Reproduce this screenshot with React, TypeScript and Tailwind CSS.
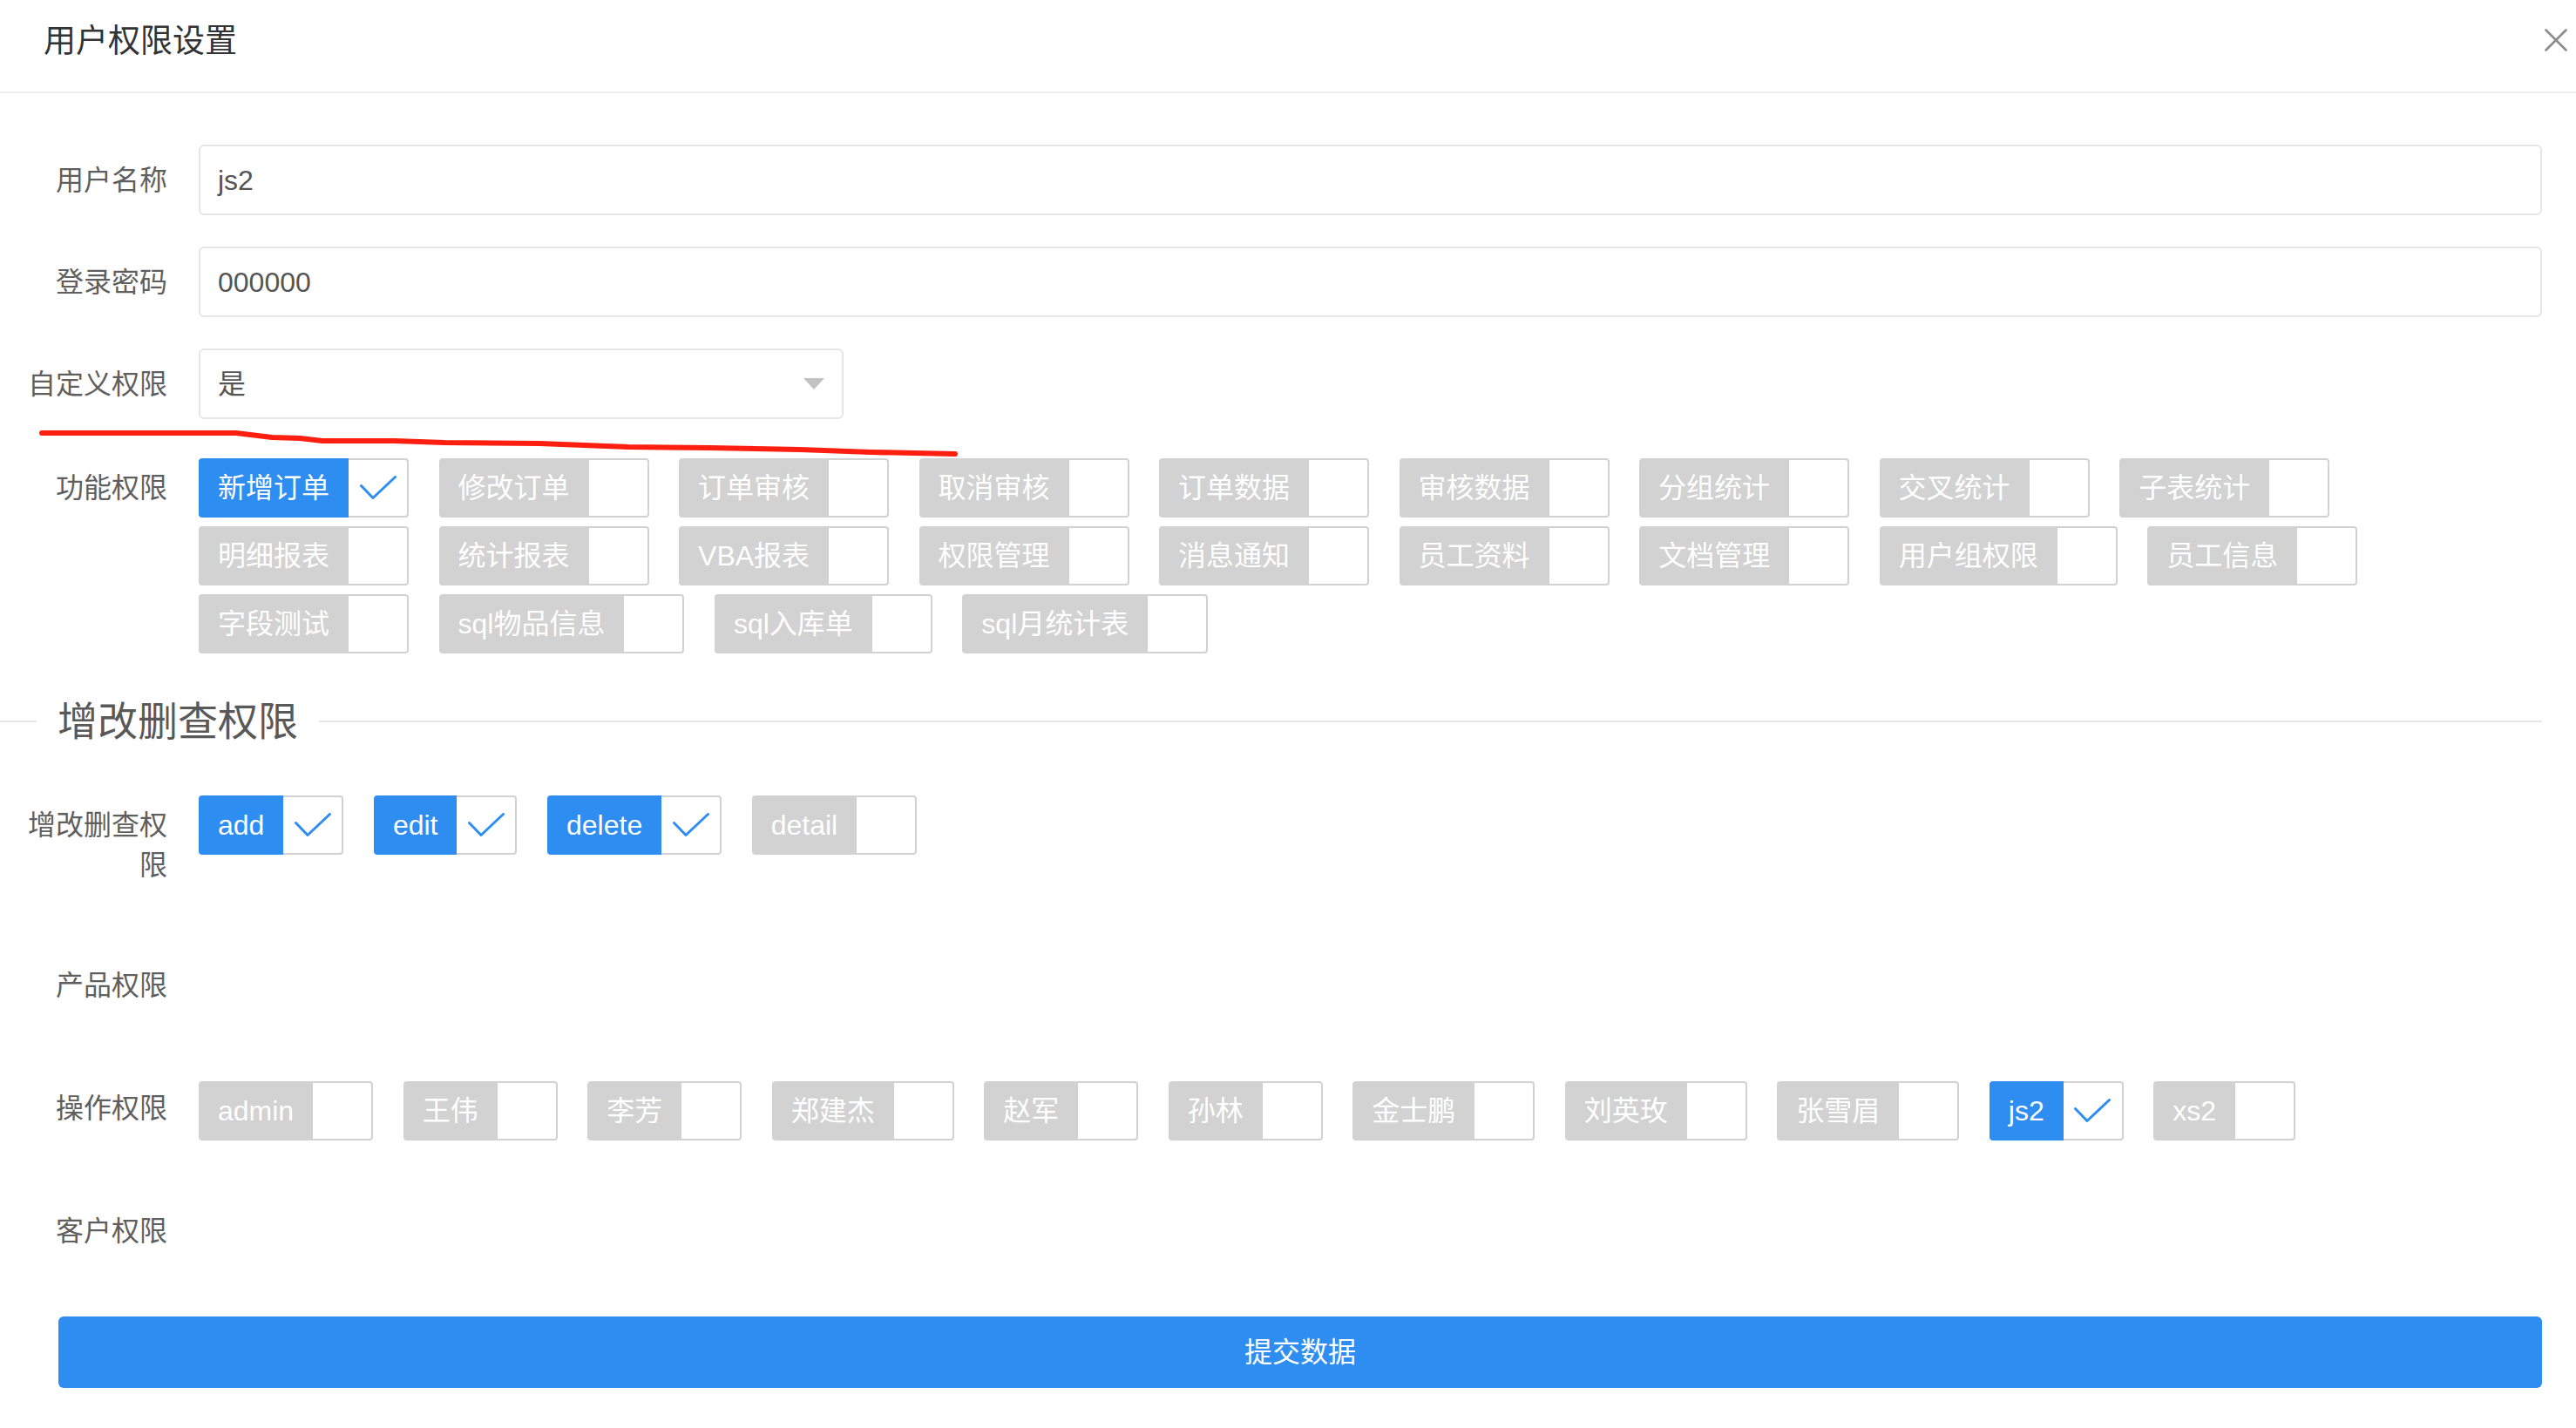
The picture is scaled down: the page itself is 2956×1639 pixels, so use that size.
import React from 'react';

type ToggleProps = { label: string; checked?: boolean };

function Check() {
  return (
    <svg width="42" height="28" viewBox="0 0 42 28" fill="none">
      <polyline points="1.5,11.5 15,25.5 40.5,1.5" stroke="#2e8df0" strokeWidth="3" strokeLinecap="round" strokeLinejoin="round" />
    </svg>
  );
}

function Toggle({ label, checked = false }: ToggleProps) {
  return (
    <div className="flex h-[68px] shrink-0">
      <span
        className={`h-full whitespace-nowrap rounded-l-[4px] px-[22px] text-[32px] leading-[68px] text-white ${
          checked ? 'bg-[#2e8df0]' : 'bg-[#d2d2d2]'
        }`}
      >
        {label}
      </span>
      <span className="flex h-full w-[69px] items-center justify-center rounded-r-[4px] border-2 border-l-0 border-[#d2d2d2] bg-white">
        {checked && <Check />}
      </span>
    </div>
  );
}

function Label({ children, className = '' }: { children: React.ReactNode; className?: string }) {
  return (
    <div className={`w-[228px] shrink-0 pl-[28px] pr-[36px] text-right text-[32px] leading-[46px] text-[#5f5f5f] ${className}`}>
      {children}
    </div>
  );
}

const funcs: ToggleProps[] = [
  { label: '新增订单', checked: true },
  { label: '修改订单' },
  { label: '订单审核' },
  { label: '取消审核' },
  { label: '订单数据' },
  { label: '审核数据' },
  { label: '分组统计' },
  { label: '交叉统计' },
  { label: '子表统计' },
  { label: '明细报表' },
  { label: '统计报表' },
  { label: 'VBA报表' },
  { label: '权限管理' },
  { label: '消息通知' },
  { label: '员工资料' },
  { label: '文档管理' },
  { label: '用户组权限' },
  { label: '员工信息' },
  { label: '字段测试' },
  { label: 'sql物品信息' },
  { label: 'sql入库单' },
  { label: 'sql月统计表' },
];

const crud: ToggleProps[] = [
  { label: 'add', checked: true },
  { label: 'edit', checked: true },
  { label: 'delete', checked: true },
  { label: 'detail' },
];

const ops: ToggleProps[] = [
  { label: 'admin' },
  { label: '王伟' },
  { label: '李芳' },
  { label: '郑建杰' },
  { label: '赵军' },
  { label: '孙林' },
  { label: '金士鹏' },
  { label: '刘英玫' },
  { label: '张雪眉' },
  { label: 'js2', checked: true },
  { label: 'xs2' },
];

export default function App() {
  return (
    <div className="relative min-h-screen w-full bg-white font-['Liberation_Sans','Noto_Sans_CJK_SC',sans-serif] text-[#5f5f5f]">
      {/* header */}
      <header className="flex h-[107px] items-center justify-between border-b-2 border-[#eeeeee] pb-[10px] pl-[50px] pr-[10px]">
        <h1 className="text-[37px] font-normal leading-none text-[#333333]">用户权限设置</h1>
        <button type="button" className="mb-[4px] flex h-[26px] w-[26px] items-center justify-center">
          <svg width="26" height="26" viewBox="0 0 26 26" fill="none">
            <line x1="1.5" y1="1.5" x2="24.5" y2="24.5" stroke="#8c8c8c" strokeWidth="2.6" strokeLinecap="round" />
            <line x1="24.5" y1="1.5" x2="1.5" y2="24.5" stroke="#8c8c8c" strokeWidth="2.6" strokeLinecap="round" />
          </svg>
        </button>
      </header>

      {/* form body */}
      <div className="pr-[39px] pt-[59px]">
        <div className="flex h-[81px] items-center">
          <Label>用户名称</Label>
          <div className="flex h-full flex-1 items-center rounded-[6px] border-2 border-[#e6e6e6] pl-[20px] text-[32px] text-[#555555]">
            js2
          </div>
        </div>

        <div className="mt-[36px] flex h-[81px] items-center">
          <Label>登录密码</Label>
          <div className="flex h-full flex-1 items-center rounded-[6px] border-2 border-[#e6e6e6] pl-[20px] text-[32px] text-[#555555]">
            000000
          </div>
        </div>

        <div className="mt-[36px] flex h-[81px] items-center">
          <Label>自定义权限</Label>
          <div className="flex h-full w-[740px] items-center justify-between rounded-[6px] border-2 border-[#e6e6e6] pl-[20px] pr-[20px] text-[32px] text-[#555555]">
            <span>是</span>
            <span className="h-0 w-0 border-x-[12px] border-t-[13px] border-x-transparent border-t-[#c2c2c2]" />
          </div>
        </div>

        <div className="mt-[45px] flex items-start">
          <Label className="pt-[11px]">功能权限</Label>
          <div className="flex flex-1 flex-wrap gap-x-[34.5px] gap-y-[10px]">
            {funcs.map((t) => (
              <Toggle key={t.label} {...t} />
            ))}
          </div>
        </div>

        {/* fieldset title */}
        <div className="mt-[48px] flex h-[60px] items-center">
          <div className="h-[2px] w-[42px] bg-[#e6e6e6]" />
          <div className="px-[24px] text-[46px] leading-[60px] text-[#595959]">增改删查权限</div>
          <div className="h-[2px] flex-1 bg-[#e6e6e6]" />
        </div>

        <div className="mt-[55px] flex items-start">
          <Label className="pt-[11px]">增改删查权限</Label>
          <div className="flex flex-1 flex-wrap gap-x-[34.5px] gap-y-[10px]">
            {crud.map((t) => (
              <Toggle key={t.label} {...t} />
            ))}
          </div>
        </div>

        <div className="mt-[81px] flex items-start">
          <Label className="pt-[11px]">产品权限</Label>
        </div>

        <div className="mt-[87px] flex items-start">
          <Label className="pt-[8px]">操作权限</Label>
          <div className="flex flex-1 flex-wrap gap-x-[34.5px] gap-y-[10px]">
            {ops.map((t) => (
              <Toggle key={t.label} {...t} />
            ))}
          </div>
        </div>

        <div className="mt-[70px] flex items-start">
          <Label className="pt-[11px]">客户权限</Label>
        </div>

        <button
          type="button"
          className="ml-[67px] mt-[75px] flex h-[82px] w-[calc(100%-67px)] items-center justify-center rounded-[6px] bg-[#2e8df0] text-[32px] text-white"
        >
          提交数据
        </button>
      </div>

      {/* red hand-drawn annotation stroke */}
      <svg
        className="pointer-events-none absolute left-0 top-0"
        width="1110"
        height="540"
        viewBox="0 0 1110 540"
        fill="none"
      >
        <polyline
          points="48,497 271,497 312,502 344,503 370,506 453,506 510,508 619,509 721,513 816,514 918,516 1000,519 1096,521"
          stroke="#ff1f10"
          strokeWidth="6"
          strokeLinecap="round"
          strokeLinejoin="round"
        />
      </svg>
    </div>
  );
}
